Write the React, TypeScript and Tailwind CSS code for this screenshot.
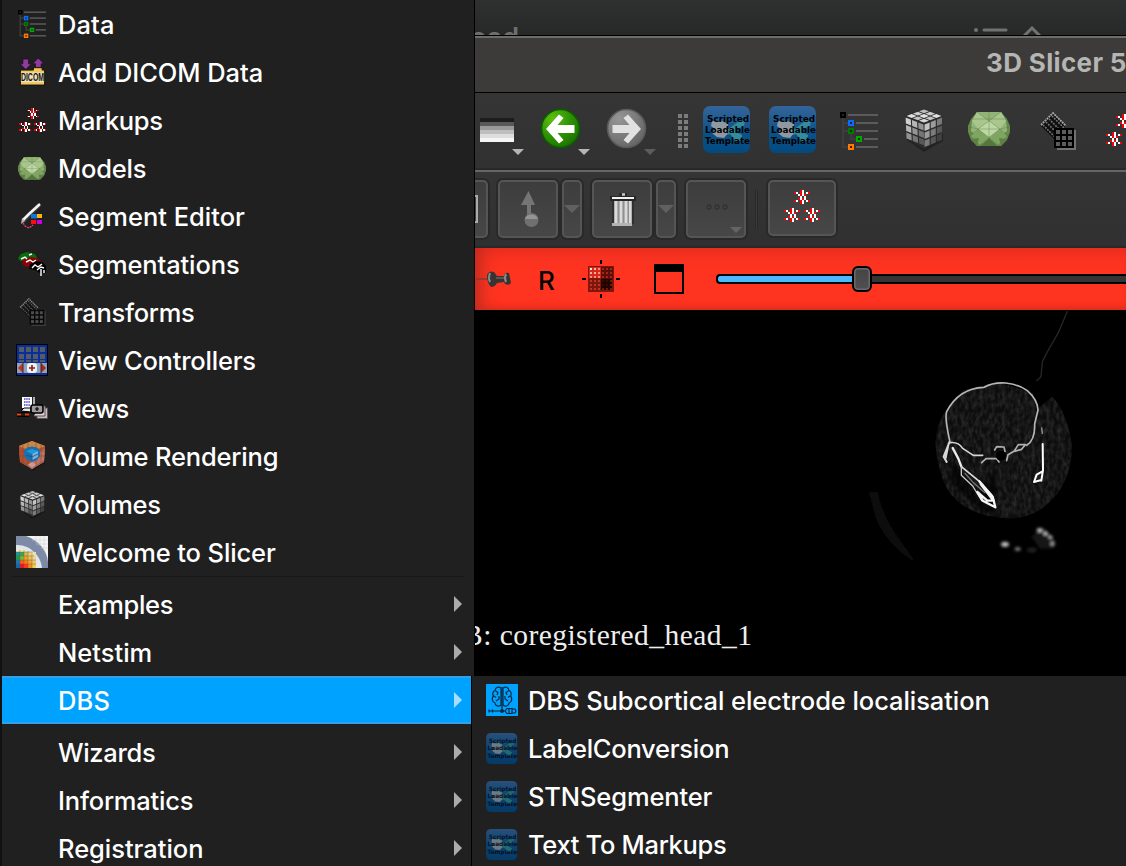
import React from "react";

type P = { className?: string };

const INTER = "font-['Inter','Liberation_Sans',sans-serif]";

/* ---------- small pixel-grid helper ---------- */
const PALETTE: Record<string, string> = {
  R: "#fb0007",
  W: "#ffffff",
};

function Grid({ rows, x = 0, y = 0 }: { rows: string[]; x?: number; y?: number }) {
  return (
    <g shapeRendering="crispEdges">
      {rows.flatMap((r, j) =>
        r.split("").map((c, i) =>
          PALETTE[c] ? <rect key={`${i}-${j}`} x={x + i} y={y + j} width={1} height={1} fill={PALETTE[c]} /> : null
        )
      )}
    </g>
  );
}

const STAR = ["...RW...", "RW.RW.WR", "..WRWR..", "...W.W..", "..RWRW..", "RW.RW.WR", "...RW..."];

function Markups({ className }: P) {
  return (
    <svg viewBox="0 0 18 16" className={className}>
      <Grid rows={STAR} x={5} y={0} />
      <Grid rows={STAR} x={0} y={9} />
      <Grid rows={STAR} x={10} y={9} />
    </svg>
  );
}

function DataTree({ className }: P) {
  const nodes: [number, number, string][] = [
    [0, 0, "#000"],
    [8, 8, "#0a6cff"],
    [8, 16, "#007a00"],
    [16, 24, "#00a800"],
    [8, 32, "#ff7a00"],
  ];
  return (
    <svg viewBox="0 0 38 38" className={className}>
      <path d="M3 6V35H8M3 11H8M3 19H8M11 22V27H16" fill="none" stroke="#3d3d3d" strokeWidth="2" />
      {nodes.map(([x, y, c]) => (
        <g key={`${x}${y}`}>
          <rect x={x + 1} y={y + 1} width="4" height="4" fill="#252525" stroke={c} strokeWidth="2" />
          <path d={`M${x + 8} ${y + 3}H38`} stroke="#5b5b5b" strokeWidth="2" />
        </g>
      ))}
    </svg>
  );
}

function Dicom({ className }: P) {
  return (
    <svg viewBox="0 0 28 30" className={className}>
      <path d="M4 1h6v5h3L7 12 1 6h3z" fill="#8d3c9c" stroke="#1c0b20" strokeWidth=".8" />
      <path d="M20 0l6 6h-3v4h-6V6h-3z" fill="#8d3c9c" stroke="#1c0b20" strokeWidth=".8" />
      <path d="M1.500 12.500H15V10h9v2.500h2.500V28h-25z" fill="#efc75c" stroke="#171305" />
      <rect x="2" y="15" width="24" height="10" fill="#efe3bd" />
      <text x="2" y="24" textLength="24" lengthAdjust="spacingAndGlyphs" fontSize="10.500" fontWeight="700" fontFamily="Liberation Sans" fill="#111">
        DICOM
      </text>
    </svg>
  );
}

function Sphere({ className }: P) {
  return (
    <svg viewBox="0 0 42 36" className={className}>
      <path d="M9 1H33L39 8 42 15V21L39 29 33 35H9L3 29 0 21V15L3 8z" fill="#668a4b" />
      <path d="M9 1H33L38 9 39 20 32 26 21 30 10 26 3 20 4 9z" fill="#93b477" />
      <path d="M21 7L32 18 21 26 10 18z" fill="#bcd7a2" />
      <path d="M9 1L21 10 10 18 4 10zM33 1L21 10 32 18 38 10z" fill="#a9c68d" />
      <path d="M13 1H29L21 10z" fill="#93b477" />
      <path d="M10 18L21 28 12 34 3 25zM32 18L21 28 30 34 39 25z" fill="#7fa562" />
      <path d="M13 35L21 27 29 35z" fill="#56763d" />
      <path d="M9 35L3 28 11 27zM33 35L39 28 31 27z" fill="#5f8044" />
      <path d="M9 1L32 18 40 25M33 1L10 18 2 25M10 18L30 34M32 18L12 34M21 1V28M1 16L10 18H32L41 16M3 8H39" fill="none" stroke="#4e6c3b" strokeWidth=".7" opacity=".5" />
    </svg>
  );
}

type V = [number, number];
function Face({ o, u, v, n, shades }: { o: V; u: V; v: V; n: number; shades: string[] }) {
  const pt = (a: number, b: number) => `${o[0] + u[0] * a + v[0] * b},${o[1] + u[1] * a + v[1] * b}`;
  const cells: React.ReactNode[] = [];
  const e = 0.03;
  for (let i = 0; i < n; i++)
    for (let j = 0; j < n; j++) {
      const a = i / n + e, b = j / n + e, c = (i + 1) / n - e, d = (j + 1) / n - e;
      cells.push(<polygon key={`${i}-${j}`} points={`${pt(a, b)} ${pt(c, b)} ${pt(c, d)} ${pt(a, d)}`} fill={shades[Math.min(i + j, shades.length - 1)]} />);
    }
  return <>{cells}</>;
}

function Cube({ className }: P) {
  return (
    <svg viewBox="0 0 40 44" className={className}>
      <path d="M3 32L20 44 39 33V26H3z" fill="#000" opacity=".3" />
      <path d="M20 1L38 8 37 31 20 41 3 31 1 8z" fill="#2b2b2b" />
      <Face o={[20, 1]} u={[18.500, 7]} v={[-18.500, 7]} n={3} shades={["#bdbdbd", "#cfcfcf", "#e2e2e2", "#c3c3c3", "#d8d8d8"]} />
      <Face o={[1, 8.500]} u={[19, 7.500]} v={[1, 22.500]} n={3} shades={["#cfcfcf", "#b6b6b6", "#949494", "#757575", "#585858"]} />
      <Face o={[20, 16]} u={[18.500, -7.500]} v={[0, 24]} n={3} shades={["#c4c4c4", "#9b9b9b", "#7b7b7b", "#585858", "#414141"]} />
    </svg>
  );
}

function VolumeRendering({ className }: P) {
  return (
    <svg viewBox="0 0 28 30" className={className}>
      <path d="M14 22V30L27 22V19z" fill="#000" opacity=".3" />
      <path d="M14 0L27 5 26 21 14 28 2 21 1 5z" fill="#b9532f" />
      <path d="M14 0L27 5 20 8 14 5 8 8 1 5z" fill="#c98745" />
      <path d="M14 20V28L26 21 27 8 22 10V16z" fill="#bf7464" />
      <path d="M14 20V28L2 21 1 8 6 10V16z" fill="#b4502f" />
      <path d="M9 24L14 21 19 24 14 28z" fill="#c99b93" />
      <path d="M1 10L27 10M1 15L27 15M5 4V23M10 2V26M18 2V26M23 4V23M2 20L14 27 26 20" fill="none" stroke="#7d4132" strokeWidth=".7" opacity=".7" />
      <path d="M6 9L10 6H18L22 9V15L19 19 14 21 9 19 6 15z" fill="#1d6fae" />
      <path d="M8 10L14 8 20 10 14 13z" fill="#1a9bdc" />
      <path d="M14 13L20 10V16L14 19z" fill="#7ab2d8" />
      <path d="M14 13V19M8 14L14 16 20 13" stroke="#0f5590" strokeWidth=".8" fill="none" />
    </svg>
  );
}

function SegmentEditor({ className }: P) {
  return (
    <svg viewBox="0 0 22 27" className={className}>
      <path d="M2 18L18 2" stroke="#3c3c3c" strokeWidth="4.500" />
      <path d="M2 17L8 11 19 1" stroke="#f2f2f2" strokeWidth="2.600" fill="none" />
      <path d="M1 15L0 21 4 18z" fill="#b9b9b9" />
      <rect x="10" y="11" width="6" height="4.500" fill="#0a74e0" />
      <rect x="16" y="11" width="5" height="4" fill="#ffb400" />
      <rect x="10" y="17" width="5" height="4" fill="#ff0d0d" />
      <rect x="16" y="17" width="5" height="4" fill="#c800e6" />
      <path d="M2 20L4 23 8 25 12 22" fill="none" stroke="#ff3f70" strokeWidth="1.300" strokeDasharray="2 1" />
    </svg>
  );
}

function Segmentations({ className }: P) {
  return (
    <svg viewBox="0 0 30 25" className={className}>
      <path d="M1 6L4 2 10 0 18 2 20 6 13 8 3 9z" fill="#056f0a" />
      <path d="M5 12L6 8 13 5 20 6 25 10 17 14 9 15z" fill="#8c0008" />
      <path d="M12 17L13 12 19 9 25 10 29 14 29 21 23 21 18 18z" fill="#000" />
      <path d="M4 7L8 5 10 7M12 3L15 2M9 10L13 8 16 10 19 8M15 16L18 13 21 15 25 12M20 18L24 15 27 16M24 17V24M27 18V21" fill="none" stroke="#fff" strokeWidth="1.400" />
    </svg>
  );
}

function Transforms({ className, line = "#8d8d8d" }: P & { line?: string }) {
  return (
    <svg viewBox="0 0 36 38" className={className}>
      <path d="M13 1L26 14 14 27 0 13z" fill="#111" />
      <path d="M1 13L13 1 26 14" fill="none" stroke="#a8a8a8" strokeWidth="1.800" strokeDasharray="2 .7" />
      <g stroke="#7b7b7b" strokeWidth="1.500" strokeDasharray="1.800 1.200">
        <path d="M3 13L15 25M6 10L18 22M9 7L21 19M12 4L24 16" />
      </g>
      <path d="M35 18V37H17" fill="none" stroke={line} strokeWidth="2" opacity=".7" />
      <rect x="14" y="16" width="20" height="20" fill="#000" />
      <g fill="#5c5c5c">
        {[0, 1, 2].flatMap((i) => [0, 1, 2].map((j) => <rect key={`${i}${j}`} x={16 + i * 6} y={18 + j * 6} width="4" height="4" />))}
      </g>
    </svg>
  );
}

function ViewControllers({ className }: P) {
  return (
    <svg viewBox="0 0 32 32" className={className}>
      <rect x=".5" y=".5" width="31" height="31" fill="#0a2f9d" stroke="#000" />
      {[0, 1].flatMap((j) => [0, 1, 2, 3].map((i) => <rect key={`${i}${j}`} x={3 + i * 7} y={3 + j * 7} width="5" height="5" fill="#555b62" />))}
      {[0, 1, 2, 3].map((i) => <path key={i} d={`M${3 + i * 7} 17h5`} stroke="#555b62" strokeWidth="2" />)}
      <rect x="1" y="19" width="30" height="10" fill="#8da0c4" />
      <rect x="11" y="19" width="10" height="10" rx="3" fill="#f1efee" />
      <path d="M16 21V27M13 24H19" stroke="#7e2113" strokeWidth="1.600" />
      <path d="M7 19V29L2 24z" fill="#c43612" />
      <path d="M25 19V29L30 24z" fill="#a42a0d" />
      <path d="M7 19V29M25 19V29" stroke="#3a2a30" />
    </svg>
  );
}

function Views({ className }: P) {
  return (
    <svg viewBox="0 0 31 24" className={className}>
      <path d="M25 12H30.500V22.500H20V18" fill="#c9bcc0" stroke="#5c5558" />
      <path d="M22 10H28V20H17" fill="#ded2d6" stroke="#5c5558" />
      <rect x="5" y="1" width="10" height="11" fill="#fff" />
      <path d="M7 3h6M7 6h6M7 9h6" stroke="#3b42c8" strokeWidth="1.600" strokeDasharray="1.500 .7" />
      <path d="M17 1V9" stroke="#ddd" strokeWidth="1.500" />
      <path d="M4 15L7 12H14V16z" fill="#e9e9e9" stroke="#000" />
      <rect x="14" y="9" width="12" height="8" rx="2" fill="#9a9a9a" stroke="#000" strokeWidth="1.600" />
      <path d="M20 11V15M18 13H22" stroke="#000" strokeWidth="1.200" />
      <path d="M0 18.500H4M8 18.500H12" stroke="#ff3c00" strokeWidth="2" />
      <path d="M0 16.700H12M0 20.300H12" stroke="#000" />
    </svg>
  );
}

function Welcome({ className }: P) {
  const heat = [
    "#1797a0", "#3aa75a", "#d6b94a", "#e8cf8a", "#eddcae",
    "#16a04e", "#7fb83d", "#f0a12e", "#f0c160", "#eed69a",
    "#1575bd", "#ff5a1f", "#ff7a1c", "#f4a33d", "#f2c574",
    "#1364b8", "#f01515", "#ff3a18", "#f98c20", "#e7cf4f",
  ];
  return (
    <svg viewBox="0 0 32 32" className={className}>
      <rect width="32" height="32" fill="#f4f4f4" />
      <path d="M0 0H10C22 4 31 14 32 26V32H0z" fill="#7d8ba6" />
      <path d="M0 9C14 8 25 20 26 32H0z" fill="#dfe7ec" />
      <path d="M0 13C12 12 20 20 21 32H0z" fill="#f5e9c4" />
      {heat.map((c, i) => {
        const col = i % 5, row = Math.floor(i / 5);
        return <rect key={i} x={col * 4} y={16 + row * 4} width="4" height="4" fill={c} />;
      })}
      <path d="M20 0V7M24 0V10M28 0V15M16 4H32M20 8H32M25 12H32" stroke="#d5d5d5" strokeWidth=".6" />
      <path d="M4 14V32M8 14V32M12 15V32M16 18V32M0 16H17M0 20H18M0 24H20M0 28H20" stroke="#6a5a2a" strokeWidth=".7" opacity=".6" />
    </svg>
  );
}

function Scripted({ className, dim }: P & { dim?: boolean }) {
  return (
    <svg viewBox="0 0 48 47" className={className}>
      <defs>
        <linearGradient id={dim ? "sd" : "sb"} x1="0" y1="0" x2="0" y2="1">
          <stop offset="0" stopColor={dim ? "#28507a" : "#34659a"} />
          <stop offset=".6" stopColor={dim ? "#0a4270" : "#0a5188"} />
          <stop offset="1" stopColor={dim ? "#063a68" : "#034a80"} />
        </linearGradient>
      </defs>
      <rect width="47" height="47" rx="7" fill={`url(#${dim ? "sd" : "sb"})`} />
      <path d="M9 15l7 1 3-1 6 3v9l-4 5-7-1-5-4 3-4-4-3z" fill={dim ? "#6d7a82" : "#9099a0"} />
      <path d="M24 24l11-8 7-1-1 5-7 3v3l5 3v5l-6 2-6-8-3 1z" fill={dim ? "#206a78" : "#338b9c"} />
      <g fontFamily="DejaVu Sans" fontWeight="700" fontSize="9" fill={dim ? "#04121f" : "#000"}>
        <text x="4" y="15.500" textLength="42" lengthAdjust="spacingAndGlyphs">Scripted</text>
        <text x="2" y="26.500" textLength="45" lengthAdjust="spacingAndGlyphs">Loadable</text>
        <text x="2" y="37.500" textLength="45" lengthAdjust="spacingAndGlyphs">Template</text>
      </g>
    </svg>
  );
}

function Brain({ className }: P) {
  return (
    <svg viewBox="0 0 32 32" className={className}>
      <rect width="32" height="32" fill="#00a2ff" />
      <g fill="none" stroke="#06283e" strokeWidth="1.200">
        <path d="M15 4C12 2 9 4 9.500 6 7 7 6 10 7.500 12 5.500 14 6 18 9 19 9 22 13 23 15 21zM17 4C20 2 23 4 22.500 6 25 7 26 10 24.500 12 26.500 14 26 18 23 19 23 22 19 23 17 21z" />
        <path d="M16 3V26M9.500 7L12 8.500 11 11M8 12L10 13.500M13 12V15L10 17M22.500 7L20 8.500 21 11M24 12L22 13.500M19 12V15L22 17" />
        <path d="M3 27H19M3 25.500V28.500M6.500 25.500V28.500M19 27L21 24.500H26V29.500H21zM26 25H29L30 27 29 29H26M23 24.500V29.500" />
        <circle cx="16" cy="27" r="1.300" fill="#06283e" />
      </g>
    </svg>
  );
}

/* ---------- toolbar drawings ---------- */
function Caret({ className }: P) {
  return (
    <svg viewBox="0 0 12 6" className={className}>
      <path d="M0 0H12L6 6z" fill="currentColor" />
    </svg>
  );
}

function RoundArrow({ back }: { back?: boolean }) {
  return (
    <svg viewBox="0 0 42 42" className="h-[42px] w-[42px] shrink-0">
      <defs>
        <radialGradient id={back ? "ga" : "gb"} cx=".3" cy=".25" r=".8">
          <stop offset="0" stopColor={back ? "#5fc00f" : "#969696"} />
          <stop offset=".55" stopColor={back ? "#2f9405" : "#7c7c7c"} />
          <stop offset="1" stopColor={back ? "#1c7400" : "#666"} />
        </radialGradient>
      </defs>
      <circle cx="20.500" cy="20.500" r="19" fill={`url(#${back ? "ga" : "gb"})`} stroke={back ? "#0b5c02" : "#5a5a5a"} strokeWidth="1.600" />
      <g transform={back ? undefined : "rotate(180 20.500 21)"}>
        <path d="M6 21L19 6.500 23.500 10 17.500 17H34.500V25H17.500L23.500 32 19 35.500z" fill={back ? "#fff" : "#e1e1e1"} />
      </g>
    </svg>
  );
}

function Btn({ className = "", children }: { className?: string; children?: React.ReactNode }) {
  return (
    <div className={`flex shrink-0 items-center justify-center rounded-[5px] border-2 border-[#555] bg-linear-to-b from-[#3d3d3d] to-[#474747] shadow-[0_0_0_2px_#292929] ${className}`}>
      {children}
    </div>
  );
}

function Trash() {
  return (
    <svg viewBox="0 0 26 34" className="h-[34px] w-[26px]">
      <path d="M9 2.500H17" stroke="#222" strokeWidth="2" />
      <path d="M12 2.500h3" stroke="#ccc" strokeWidth="2.500" />
      <rect x="0" y="4" width="26" height="5" fill="#262626" />
      <rect x="2" y="5" width="22" height="2" fill="#f2f2f2" />
      <rect x="2" y="9" width="22" height="23" fill="#303030" />
      <rect x="4" y="9" width="18" height="22" fill="#b0b0b0" />
      <path d="M6 9V31M11 9V31M16 9V31M20 9V31" stroke="#e4e4e4" strokeWidth="1.600" />
      <path d="M8.500 9V31M13.500 9V31M18.500 9V31" stroke="#8f8f8f" />
      <rect x="2" y="31" width="20" height="3" fill="#b3b3b3" />
    </svg>
  );
}

function PlacePoint() {
  return (
    <svg viewBox="0 0 18 36" className="ml-1 h-9 w-[18px]">
      <path d="M7.500 0L14 14H10V24H6V14H0z" fill="#757575" />
      <circle cx="10.500" cy="29" r="7" fill="#707070" />
      <path d="M4 28A7 7 0 0 1 17 28z" fill="#949494" />
    </svg>
  );
}

function Pin() {
  return (
    <svg viewBox="0 0 36 18" className="h-[18px] w-9">
      <path d="M0 9H12" stroke="#86392f" strokeWidth="1.500" />
      <path d="M11 5Q13 0 18 2L21 6 28 6Q29 2 33 3L34 8 35 13Q33 16 29 14L28 12 21 13Q19 17 15 17 11 13 11 5z" fill="#383433" />
      <path d="M14 3Q12 8 14 12M30 4Q28 8 30 12" fill="none" stroke="#8a8a8a" strokeWidth="2" />
      <path d="M20 8H28" stroke="#666160" strokeWidth="1.500" />
    </svg>
  );
}

function Crosshair() {
  const cells: React.ReactNode[] = [];
  for (let i = 0; i < 6; i++)
    for (let j = 0; j < 6; j++) {
      const left = i < 3, top = j < 3;
      const fill = left && top ? ["#ffe9e4", "#ffb3a6", "#ff8a78"][Math.max(i, j)] : left ? "#c9301f" : top ? "#a32618" : i === 5 || j === 5 ? "#7c170d" : "#3a0a05";
      cells.push(<rect key={`${i}${j}`} x={8 + i * 4} y={8 + j * 4} width="2" height="2" fill={fill} />);
    }
  return (
    <svg viewBox="0 0 38 38" className="h-[38px] w-[38px] shrink-0">
      <path d="M19 0V4M19 34V38M0 19H4M34 19H38" stroke="#000" strokeWidth="2" />
      <rect x="6" y="6" width="26" height="26" fill="#7c170d" />
      <rect x="19" y="7" width="12" height="12" fill="#5a0e07" />
      <rect x="19" y="19" width="11" height="11" fill="#230300" />
      <rect x="7" y="7" width="12" height="11" fill="#d8281a" />
      {cells}
    </svg>
  );
}

function Scan() {
  return (
    <svg viewBox="0 30 828 780" className="h-[260px] w-[276px] shrink-0">
      <defs>
        <filter id="tissue" x="0" y="0" width="1" height="1" colorInterpolationFilters="sRGB">
          <feTurbulence type="fractalNoise" baseFrequency=".09 .05" numOctaves="2" seed="4" />
          <feColorMatrix values="0 0 0 0 .2  0 0 0 0 .2  0 0 0 0 .2  1.500 0 0 0 -.5" />
          <feComposite in2="SourceGraphic" operator="in" />
        </filter>
        <filter id="soft"><feGaussianBlur stdDeviation="1.300" /></filter>
        <filter id="soft2"><feGaussianBlur stdDeviation="4" /></filter>
      </defs>
      <path d="M290 330C250 380 250 450 270 510 285 590 350 640 440 652 510 665 570 640 610 595 660 545 675 450 660 400 645 340 620 300 605 290L560 330 548 280 450 247 340 270z" fill="#0d0d0d" />
      <path d="M290 330C250 380 250 450 270 510 285 590 350 640 440 652 510 665 570 640 610 595 660 545 675 450 660 400 645 340 620 300 605 290L560 330 548 280 450 247 340 270z" fill="#fff" filter="url(#tissue)" />
      <path d="M440 500L438 640 400 640 300 540 300 490 330 500 380 590z" fill="#000" opacity=".6" filter="url(#soft2)" />
      <g fill="none" strokeLinecap="round" strokeLinejoin="round" filter="url(#soft)">
        <path d="M652 34L625 98 595 150 577 185 573 230 560 242" stroke="#262626" strokeWidth="4" />
        <path d="M299 422C292 390 284 350 290 335 312 292 350 264 402 262 440 240 495 246 532 272 550 288 563 310 564 330L554 372C555 400 548 425 530 436" stroke="#b6b6b6" strokeWidth="5" />
        <path d="M299 425L281 470 290 486M296 430L287 474" stroke="#d8d8d8" strokeWidth="6" />
        <path d="M300 428Q325 425 338 445L370 466 398 466" stroke="#d5d5d5" strokeWidth="5" />
        <path d="M308 444L325 476 334 500" stroke="#ededed" strokeWidth="7" />
        <path d="M334 500L388 544 425 585 433 605" stroke="#dcdcdc" strokeWidth="5" />
        <path d="M334 500L334 526 368 558 395 602" stroke="#c8c8c8" strokeWidth="4" />
        <path d="M388 544L428 590 436 622 398 602 382 576 412 602 430 602 392 552" stroke="#f5f5f5" strokeWidth="7" />
        <path d="M345 520L372 550 405 578" stroke="#777" strokeWidth="4" />
        <path d="M395 488L408 476 440 476 447 486M470 482L474 464 492 454 505 434 526 434 515 448 492 454M434 450L440 440 462 441 465 454" stroke="#b0b0b0" strokeWidth="5" />
        <path d="M575 384L577 400" stroke="#9a9a9a" strokeWidth="4" />
        <path d="M578 432L579 510 574 542M560 524L576 515M560 524L552 546 574 540" stroke="#fff" strokeWidth="6" />
      </g>
      <circle cx="453" cy="467" r="15" fill="#000" />
      <g filter="url(#soft2)">
        <path d="M545 710L580 685 612 715 610 745 570 745z" fill="#181818" />
        <path d="M55 575H85Q90 620 130 690L200 790Q110 740 75 650z" fill="#080808" />
        <ellipse cx="545" cy="750" rx="14" ry="7" fill="#242424" />
        <ellipse cx="465" cy="733" rx="12" ry="8" fill="#bbb" />
        <ellipse cx="503" cy="747" rx="9" ry="6" fill="#777" />
        <ellipse cx="569" cy="690" rx="9" ry="6" fill="#bbb" />
        <circle cx="587" cy="700" r="6.500" fill="#bbb" />
        <circle cx="601" cy="711" r="5.500" fill="#bbb" />
        <circle cx="608" cy="731" r="7" fill="#999" />
      </g>
    </svg>
  );
}

/* ---------- window behind the menus ---------- */
function MainWindow() {
  return (
    <div className="ml-[474px] flex h-full w-[652px] flex-col">
      <div className="flex h-[35px] items-start justify-between overflow-hidden bg-linear-to-b from-[#2e3130] to-[#272928]">
        <div className={`-ml-[20px] mt-[21px] text-[27px] leading-[33px] font-semibold text-[#6e706f] ${INTER}`}>head</div>
        <svg viewBox="0 0 68 10" className="mt-[26px] mr-[84px] h-[10px] w-[68px]">
          <circle cx="2" cy="4" r="2" fill="#717372" />
          <path d="M10 4H32" stroke="#717372" strokeWidth="3" strokeLinecap="round" />
          <path d="M50 10L58 2 66 10" fill="none" stroke="#717372" strokeWidth="3" />
        </svg>
      </div>
      <div className="flex h-[58px] items-center justify-end overflow-hidden border-t border-b border-black bg-[#3c3b39] shadow-[inset_0_2px_0_#6d6d6a]">
        <div className={`-mt-0.5 w-[140px] shrink-0 text-[26px] leading-8 font-bold tracking-[0.35px] whitespace-nowrap text-[#b5b5b4] ${INTER}`}>3D Slicer 5</div>
      </div>
      <div className="flex h-[77px] shrink-0 items-start overflow-hidden border-b-2 border-[#292929] bg-linear-to-b from-[#353535] to-[#313131] pl-1.5">
        <div className="mt-[25px] flex h-6 w-[34px] shrink-0 flex-col">
          <div className="h-1 bg-[#1d1d1d]" />
          <div className="h-1 bg-[#585858]" />
          <div className="h-1 bg-[#999]" />
          <div className="h-1 bg-[#bebebe]" />
          <div className="h-1 bg-[#dedede]" />
          <div className="h-1 bg-[#f5f5f5]" />
        </div>
        <Caret className="mt-14 -ml-0.5 h-1.5 w-3 shrink-0 text-[#b5b5b5]" />
        <div className="mt-[15px] ml-4"><RoundArrow back /></div>
        <Caret className="mt-14 -ml-1 h-1.5 w-3 shrink-0 text-[#b5b5b5]" />
        <div className="mt-[15px] ml-4"><RoundArrow /></div>
        <Caret className="mt-14 -ml-1 h-1.5 w-3 shrink-0 text-[#5c5c5c]" />
        <div className="mt-[21px] ml-[22px] grid w-[10px] shrink-0 grid-cols-2 gap-0.5">
          {Array.from({ length: 12 }, (_, i) => <div key={i} className="h-1 w-1 bg-[#7c7c7c]" />)}
        </div>
        <Scripted className="mt-[13px] ml-[15px] h-[47px] w-12 shrink-0" />
        <Scripted className="mt-[13px] ml-[18px] h-[47px] w-12 shrink-0" />
        <DataTree className="mt-[19px] ml-[23px] h-[38px] w-[38px] shrink-0" />
        <Cube className="mt-[15px] ml-[26px] h-11 w-10 shrink-0" />
        <Sphere className="mt-[18px] ml-[24px] h-9 w-[42px] shrink-0" />
        <Transforms className="mt-[19px] ml-[30px] h-[38px] w-9 shrink-0" />
        <Markups className="mt-[21px] ml-[30px] h-8 w-9 shrink-0" />
      </div>
      <div className="flex h-[78px] shrink-0 items-start border-t-2 border-b-2 border-t-[#666] border-b-[#292929] bg-linear-to-b from-[#353535] to-[#303030] pt-2">
        <Btn className="h-[58px] w-[14px] rounded-l-none border-l-0">
          <div className="mr-auto h-7 w-1 border-y-2 border-r-2 border-[#aaa]" />
        </Btn>
        <Btn className="ml-[10px] h-[58px] w-[60px]"><PlacePoint /></Btn>
        <Btn className="ml-1 h-[58px] w-5"><Caret className="h-2 w-4 shrink-0 text-[#606060]" /></Btn>
        <Btn className="ml-[10px] h-[58px] w-[60px]"><div className="ml-0.5"><Trash /></div></Btn>
        <Btn className="ml-1 h-[58px] w-5"><Caret className="h-2 w-4 shrink-0 text-[#606060]" /></Btn>
        <Btn className="relative ml-[10px] h-[58px] w-[60px]">
          <svg viewBox="0 0 22 6" className="mb-1 ml-0.5 h-1.5 w-[22px]">
            <g fill="none" stroke="#353535" strokeWidth="1.800">
              <circle cx="3" cy="3" r="2" />
              <circle cx="11" cy="3" r="2" />
              <circle cx="19" cy="3" r="2" />
            </g>
          </svg>
          <Caret className="absolute right-0.5 bottom-[3px] h-1.5 w-3 text-[#646464]" />
        </Btn>
        <div className="mt-2.5 ml-[9px] h-[38px] w-[3px] border-x border-[#292929] bg-[#3a3a3a]" />
        <Btn className="ml-[10px] h-[56px] w-[68px]"><Markups className="-mt-1 h-8 w-9" /></Btn>
      </div>
      <div className="flex h-[62px] shrink-0 items-center bg-linear-to-b from-[#fb3322] via-[#ff3420] to-[#ff3420] shadow-[inset_20px_0_18px_-14px_#b82a1e,inset_0_-8px_8px_-6px_#d52c1d,inset_0_14px_12px_-8px_#e92f20]">
        <div className="ml-0.5 shrink-0"><Pin /></div>
        <div className={`ml-[26px] w-[20px] shrink-0 pt-0.5 text-[26px] font-medium text-black ${INTER}`}>R</div>
        <div className="ml-6 shrink-0"><Crosshair /></div>
        <div className="ml-[34px] h-[30px] w-[30px] shrink-0 border-2 border-t-8 border-black" />
        <div className="ml-8 flex shrink-0 items-center">
          <div className="h-[10px] w-[136px] rounded-l-[4px] border-2 border-r-0 border-black bg-[#4db8fe]" />
          <div className="h-[26px] w-5 rounded-[6px] border-2 border-black bg-linear-to-b from-[#444] to-[#505050] shadow-[inset_0_0_0_1.500px_#6b6b6b]" />
          <div className="h-[10px] w-[254px] border-y-2 border-black bg-[#343434]" />
        </div>
      </div>
      <div className="relative flex flex-1 items-start justify-end overflow-hidden bg-black">
        <Scan />
        <div className="absolute top-[305px] left-[-11px] font-['Liberation_Serif',serif] text-[29.5px] leading-10 tracking-[0.46px] whitespace-nowrap text-[#eee]">B: coregistered_head_1</div>
      </div>
    </div>
  );
}

/* ---------- menus ---------- */
type Item = { label: string; icon?: React.ReactNode; track?: string };

const modules: Item[] = [
  { label: "Data", icon: <DataTree className="h-[28px] w-[28px]" />, track: "tracking-[0.1px]" },
  { label: "Add DICOM Data", icon: <Dicom className="h-[29px] w-[27px]" />, track: "tracking-[-0.07px]" },
  { label: "Markups", icon: <Markups className="h-6 w-[27px]" />, track: "tracking-[-0.35px]" },
  { label: "Models", icon: <Sphere className="h-[25px] w-[28px]" />, track: "tracking-[-0.2px]" },
  { label: "Segment Editor", icon: <SegmentEditor className="h-[27px] w-[22px]" />, track: "tracking-[0px]" },
  { label: "Segmentations", icon: <Segmentations className="h-[25px] w-[30px]" />, track: "tracking-[-0.12px]" },
  { label: "Transforms", icon: <Transforms line="#555" className="h-[28px] w-[27px] opacity-75" />, track: "tracking-[-0.3px]" },
  { label: "View Controllers", icon: <ViewControllers className="h-8 w-8" />, track: "tracking-[-0.22px]" },
  { label: "Views", icon: <Views className="h-6 w-[31px]" />, track: "tracking-[-0.7px]" },
  { label: "Volume Rendering", icon: <VolumeRendering className="h-[30px] w-7" />, track: "tracking-[-0.18px]" },
  { label: "Volumes", icon: <Cube className="h-[29px] w-[27px]" />, track: "tracking-[-0.38px]" },
  { label: "Welcome to Slicer", icon: <Welcome className="h-8 w-8" />, track: "tracking-[-0.12px]" },
];

const groups: Item[] = [
  { label: "Examples", track: "tracking-[-0.3px]" },
  { label: "Netstim", track: "tracking-[0px]" },
  { label: "DBS", track: "tracking-[0.2px]" },
];
const moreGroups: Item[] = [
  { label: "Wizards", track: "tracking-[-0.33px]" },
  { label: "Informatics", track: "tracking-[-0.2px]" },
  { label: "Registration", track: "tracking-[-0.03px]" },
];

const submenu: Item[] = [
  { label: "DBS Subcortical electrode localisation", icon: <Brain className="h-8 w-8" />, track: "tracking-[-0.07px]" },
  { label: "LabelConversion", icon: <Scripted dim className="h-[31px] w-8" />, track: "tracking-[-0.25px]" },
  { label: "STNSegmenter", icon: <Scripted dim className="h-[31px] w-8" />, track: "tracking-[-0.13px]" },
  { label: "Text To Markups", icon: <Scripted dim className="h-[31px] w-8" />, track: "tracking-[-0.32px]" },
];

function Row({ item, arrow }: { item: Item; arrow?: boolean }) {
  const active = item.label === "DBS";
  return (
    <div className={`flex h-12 shrink-0 items-center pl-[14px] ${active ? "w-[469px] border-y-2 border-[#35a0e6] bg-[#00a2ff] pr-[9px]" : "w-[472px] pr-3"}`}>
      <div className="flex w-8 shrink-0 items-center justify-center">{item.icon}</div>
      <div className={`ml-[10px] pt-0.5 text-[25.5px] leading-8 font-[470] whitespace-nowrap text-white ${item.track ?? ""}`}>{item.label}</div>
      {arrow && (
        <svg viewBox="0 0 8 16" className={`ml-auto h-4 w-2 ${active ? "text-[#a9dcfb]" : "text-[#ababab]"}`}>
          <path d="M0 0L8 8 0 16z" fill="currentColor" />
        </svg>
      )}
    </div>
  );
}

export default function App() {
  return (
    <div className="relative h-[866px] w-[1126px] overflow-hidden bg-[#111]">
      <MainWindow />
      <div className={`absolute top-0 left-0 flex h-[866px] w-[475px] flex-col border-r border-l-2 border-r-black border-l-[#111] bg-[#202020] ${INTER}`}>
        {modules.map((m) => <Row key={m.label} item={m} />)}
        <div className="mr-2.5 ml-[9px] h-1 shrink-0 border-t border-[#181818]" />
        {groups.map((m) => <Row key={m.label} item={m} arrow />)}
        <div className="mr-2.5 ml-[9px] h-1 shrink-0" />
        {moreGroups.map((m) => <Row key={m.label} item={m} arrow />)}
      </div>
      <div className={`absolute top-[676px] left-[471px] flex h-[190px] w-[655px] flex-col overflow-hidden border-l border-black bg-[#202020] ${INTER}`}>
        {submenu.map((m) => <Row key={m.label} item={m} />)}
      </div>
    </div>
  );
}
